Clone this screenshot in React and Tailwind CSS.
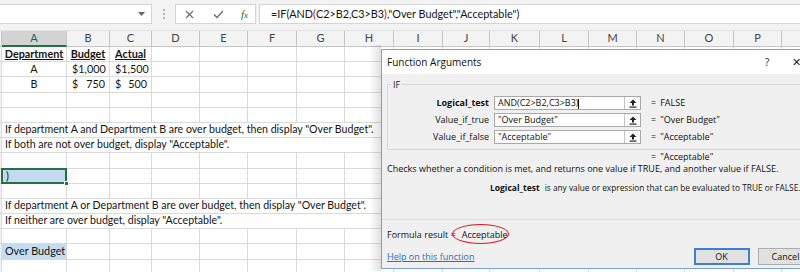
import React from "react";

const COLS = [2, 65, 43, 42, 48, 48, 49, 48, 49, 49, 47, 50, 49, 48, 48, 49, 48, 40];
const HEAD = ["", "A", "B", "C", "D", "E", "F", "G", "H", "I", "J", "K", "L", "M", "N", "O", "P", ""];
const gridCols =
  "grid grid-cols-[2px_65px_43px_42px_48px_48px_49px_48px_49px_49px_47px_50px_49px_48px_48px_49px_48px_40px]";

const XL = { fontFamily: "Lato, 'Liberation Sans', sans-serif" };
const UI = { fontFamily: "'Open Sans', 'Noto Sans', sans-serif" };

function Cell({ children, className = "" }) {
  return (
    <div className={"h-[15.2px] border-r border-b border-[#dadada] flex items-center overflow-visible whitespace-nowrap " + className}>
      {children}
    </div>
  );
}

function Row({ kind, data }) {
  if (kind === "span") {
    return (
      <>
        <Cell className="bg-[#f2f2f2] border-[#c8c8c8]" />
        <div className="col-span-8 h-[15.2px] border-r border-b border-[#dadada] flex items-center whitespace-nowrap pl-[3px] text-[10.6px] text-[#141414]">
          {data}
        </div>
        {COLS.slice(9).map((_, i) => (
          <Cell key={i} />
        ))}
      </>
    );
  }
  return (
    <>
      <Cell className="bg-[#f2f2f2] border-[#c8c8c8]" />
      {COLS.slice(1).map((_, i) => {
        const v = data && data[i];
        if (!v) return <Cell key={i} />;
        return <React.Fragment key={i}>{v}</React.Fragment>;
      })}
    </>
  );
}

function Money({ n }) {
  return (
    <Cell className="justify-between pl-[5px] pr-[4px] text-[10.8px] text-[#141414]">
      <span>$</span>
      <span>{n}</span>
    </Cell>
  );
}

function UpArrow() {
  return (
    <svg width="8" height="9" viewBox="0 0 8 9">
      <path d="M4 0.5 L7.5 4 L5 4 L5 6.5 L3 6.5 L3 4 L0.5 4 Z" fill="#222" />
      <rect x="0.5" y="7.5" width="7" height="1.2" fill="#222" />
    </svg>
  );
}

function ArgRow({ label, value, result }) {
  return (
    <div className="flex items-center h-[14px] whitespace-nowrap">
      <div className="w-[101px] text-right text-[9px] text-[#111]">
        {label === "Logical_test" ? <b>{label}</b> : label}
      </div>
      <div className="ml-[5px] flex h-[14px] w-[147px] border border-[#a9a9a9] bg-white">
        <div className="flex-1 flex items-center pl-[3px] text-[9px] text-[#111]">{value}</div>
        <div className="w-[16px] border-l border-[#c4c4c4] flex items-center justify-center">
          <UpArrow />
        </div>
      </div>
      <div className="ml-[10px] text-[9px] text-[#222]">=</div>
      <div className="ml-[4px] text-[9px] text-[#111]">{result}</div>
    </div>
  );
}

export default function App() {
  const t = "text-[10.8px] text-[#141414]";
  const rows = [
    {
      data: [
        <Cell className={"justify-center font-bold underline " + t}>Department</Cell>,
        <Cell className={"justify-center font-bold underline " + t}>Budget</Cell>,
        <Cell className={"justify-center font-bold underline " + t}>Actual</Cell>,
      ],
    },
    {
      data: [<Cell className={"justify-center " + t}>A</Cell>, <Money n="1,000" />, <Money n="1,500" />],
    },
    {
      data: [<Cell className={"justify-center " + t}>B</Cell>, <Money n="750" />, <Money n="500" />],
    },
    {},
    {},
    { kind: "span", data: 'If department A and Department B are over budget, then display "Over Budget".' },
    { kind: "span", data: 'If both are not over budget, display "Acceptable".' },
    {},
    {
      data: [
        <div className="relative h-[15.2px] border-b border-r border-[#dadada] bg-[#c3d9ee]">
          <div className={"absolute -left-[1px] -top-[1px] right-[-1px] bottom-[-1px] border-2 border-[#217346] flex items-center pl-[3px] " + t}>
            )
          </div>
          <div className="absolute right-[-3px] bottom-[-3px] w-[5px] h-[5px] bg-[#217346] border border-white" />
        </div>,
      ],
    },
    {},
    { kind: "span", data: 'If department A or Department B are over budget, then display "Over Budget".' },
    { kind: "span", data: 'If neither are over budget, display "Acceptable".' },
    {},
    {
      data: [<Cell className={"bg-[#c5ddf1] pl-[3px] " + t}>Over Budget</Cell>],
    },
    {},
  ];

  return (
    <div className="relative w-[800px] h-[272px] overflow-hidden bg-white" style={XL}>
      {/* formula bar */}
      <div className="h-[31px] bg-[#f3f3f3] flex items-start pt-[4px] border-b border-[#e2e2e2]">
        <div className="w-[152px] h-[20px] bg-white border border-[#d5d5d5] border-l-0 flex items-center justify-end pr-[6px]">
          <svg width="7" height="4" viewBox="0 0 7 4">
            <path d="M0 0 L7 0 L3.5 4 Z" fill="#666" />
          </svg>
        </div>
        <div className="w-[23px] h-[20px] flex flex-col items-center justify-center gap-[2px]">
          <div className="w-[2px] h-[2px] bg-[#b5b5b5]" />
          <div className="w-[2px] h-[2px] bg-[#b5b5b5]" />
          <div className="w-[2px] h-[2px] bg-[#b5b5b5]" />
        </div>
        <div className="w-[81px] h-[20px] bg-white border border-[#d5d5d5] flex items-center">
          <svg className="ml-[9px]" width="9" height="9" viewBox="0 0 9 9">
            <path d="M1 1 L8 8 M8 1 L1 8" stroke="#6b6b6b" strokeWidth="1.2" />
          </svg>
          <svg className="ml-[19px]" width="11" height="9" viewBox="0 0 11 9">
            <path d="M1 4.5 L4 7.5 L10 1" stroke="#6b6b6b" strokeWidth="1.3" fill="none" />
          </svg>
          <span className="ml-[17px] text-[11px] italic text-[#217346]" style={{ fontFamily: "'Liberation Serif', serif" }}>
            f<span className="text-[9px]">x</span>
          </span>
        </div>
        <div className="ml-[3px] flex-1 h-[20px] bg-white border border-[#d5d5d5] border-r-0 flex items-center pl-[11px] text-[10.8px] text-[#141414] whitespace-nowrap">
          =IF(AND<span className="text-[#c00000]">(</span>C2&gt;B2,C3&gt;B3<span className="text-[#c00000]">)</span>,"Over Budget","Acceptable")
        </div>
      </div>

      {/* column headers */}
      <div className={gridCols + " h-[16px] bg-[#f3f3f3]"}>
        {HEAD.map((h, i) => (
          <div
            key={i}
            className={
              "h-[16px] border-r border-b border-[#c6c6c6] flex items-center justify-center text-[11px] " +
              (h === "A" ? "bg-[#d3d3d3] border-b-2 border-b-[#217346] text-[#1e6b3e]" : "text-[#444]")
            }
          >
            {h}
          </div>
        ))}
      </div>

      {/* grid */}
      <div className={gridCols}>
        {rows.map((r, i) => (
          <Row key={i} kind={r.kind} data={r.data} />
        ))}
      </div>

      {/* dialog shadow */}
      <div className="absolute left-[369px] top-[45px] w-[12px] h-[226px] bg-gradient-to-r from-transparent to-[rgba(0,0,0,0.12)]" />

      {/* dialog */}
      <div className="absolute left-[381px] top-[49px] w-[440px] h-[220px] border border-[#7b9fd4] bg-[#f0f0f0] flex flex-col whitespace-nowrap" style={UI}>
        <div className="h-[24px] bg-white flex items-center pl-[5px] text-[10px] text-[#111] relative">
          Function Arguments
          <span className="absolute left-[383px] top-[5px] text-[10px] text-[#222]">?</span>
          <span className="absolute left-[410px] top-[4px] text-[11px] text-[#222]">✕</span>
        </div>
        <div className="relative mt-[10px] ml-[5px] h-[66px] border border-[#d8d8d8] pt-[11px] flex flex-col gap-[3px]">
          <span className="absolute -top-[7px] left-[3px] px-[2px] bg-[#f0f0f0] text-[9px] text-[#222]">IF</span>
          <ArgRow
            label="Logical_test"
            value={
              <span>
                AND(C2&gt;B2,C3&gt;B3)<span className="inline-block w-px h-[10px] bg-black align-middle" />
              </span>
            }
            result="FALSE"
          />
          <ArgRow label="Value_if_true" value={'"Over Budget"'} result={'"Over Budget"'} />
          <ArgRow label="Value_if_false" value={'"Acceptable"'} result={'"Acceptable"'} />
        </div>
        <div className="h-[12px] mt-[1px] flex items-center text-[9px] text-[#111] pl-[269px]">
          <span>=</span>
          <span className="ml-[4px]">"Acceptable"</span>
        </div>
        <div className="h-[12px] flex items-center pl-[5px] text-[9px] text-[#111]">
          Checks whether a condition is met, and returns one value if TRUE, and another value if FALSE.
        </div>
        <div className="h-[12px] mt-[7px] flex items-center text-[#111]">
          <b className="ml-[108px] text-[8.5px]">Logical_test</b>
          <span className="ml-[5px] text-[8.3px]">is any value or expression that can be evaluated to TRUE or FALSE.</span>
        </div>
        <div className="mt-[25px] h-px bg-[#dcdcdc]" />
        <div className="relative h-[12px] mt-[9px] flex items-center pl-[5px] text-[9px] text-[#111]">
          Formula result =<span className="ml-[6px]">Acceptable</span>
          <div className="absolute left-[70px] top-[-5px] w-[57px] h-[20px] rounded-[50%] border-[1.5px] border-[#e0141e]" />
        </div>
        <div className="mt-[7px] h-[17px] flex items-center">
          <span className="ml-[5px] text-[9px] text-[#2a6ebb] underline">Help on this function</span>
          <div className="ml-[219px] w-[56px] h-[17px] border-2 border-[#3c7fd6] bg-[#e1e1e1] flex items-center justify-center text-[9px] text-[#111]">
            OK
          </div>
          <div className="ml-[8px] w-[56px] h-[17px] border border-[#adadad] bg-[#e1e1e1] flex items-center justify-center text-[9px] text-[#111]">
            Cancel
          </div>
        </div>
      </div>
    </div>
  );
}
